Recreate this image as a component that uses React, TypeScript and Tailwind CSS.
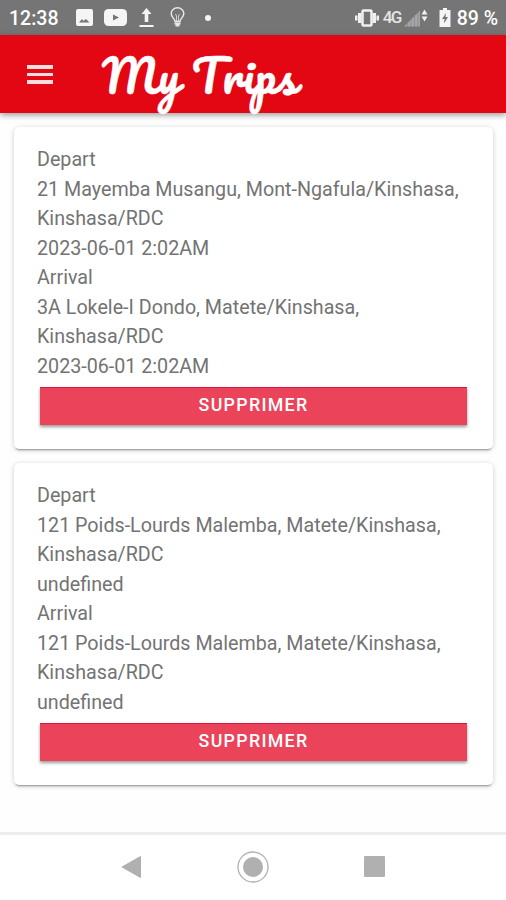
import React from "react";

interface Trip {
  id: number;
  depart: string[];
  departTime: string;
  arrival: string[];
  arrivalTime: string;
}

const trips: Trip[] = [
  {
    id: 1,
    depart: ["21 Mayemba Musangu, Mont-Ngafula/Kinshasa,", "Kinshasa/RDC"],
    departTime: "2023-06-01 2:02AM",
    arrival: ["3A Lokele-I Dondo, Matete/Kinshasa,", "Kinshasa/RDC"],
    arrivalTime: "2023-06-01 2:02AM",
  },
  {
    id: 2,
    depart: ["121 Poids-Lourds Malemba, Matete/Kinshasa,", "Kinshasa/RDC"],
    departTime: "undefined",
    arrival: ["121 Poids-Lourds Malemba, Matete/Kinshasa,", "Kinshasa/RDC"],
    arrivalTime: "undefined",
  },
];

const StatusBar: React.FC = () => (
  <div className="flex h-[35px] shrink-0 items-center bg-[#757575] pl-[9px] pr-[8px] text-white">
    <span className="w-[67px] pt-[2px] text-[19.500px] leading-[33px] font-medium whitespace-nowrap">12:38</span>

    {/* Notifications */}
    <svg className="h-[17px] w-[17px]" viewBox="0 0 17 17">
      <rect width="17" height="17" rx="2" fill="#f5f5f5" />
      <path d="M3 13.500l3-3.500 1.500 2 1-1 1.500-1 3.500 3.500z" fill="#757575" />
    </svg>
    <svg className="ml-[11px] h-[17px] w-[23px]" viewBox="0 0 23 17">
      <rect width="23" height="17" rx="4.500" fill="#f5f5f5" />
      <path d="M9 5.500l6 3-6 3z" fill="#757575" />
    </svg>
    <svg className="ml-[12px] h-[20px] w-[15px]" viewBox="0 0 15 20">
      <path d="M7.500 0l5 6H9.300V14H5.700V6H2.500zM.5 17h14v2H.5z" fill="#f5f5f5" />
    </svg>
    <svg className="ml-[16px] h-[21px] w-[15px]" viewBox="0 0 15 21" fill="none" stroke="#e8e8e8" strokeWidth="1.500">
      <path d="M5 14.500c0-3-3.800-4-3.800-8a6.300 5.700 0 0 1 12.600 0c0 4-3.800 5-3.800 8z" />
      <path d="M5.500 7l1 2v5M9.500 7l-1 2v5" strokeWidth=".8" />
      <path d="M4.500 16.500h6M5.500 18.500h4" strokeWidth="2" />
    </svg>
    <span className="ml-[20px] h-[6px] w-[6px] rounded-full bg-[#f5f5f5]" />

    {/* System state */}
    <div className="ml-auto flex items-center">
      <svg className="h-[18px] w-[24px]" viewBox="0 0 24 18" fill="#f0f0f0">
        <path d="M0 6.500h2.500v5H0zM3 4h3.500v10H3zM17.500 4H21v10h-3.500zM21.500 6.500H24v5h-2.500z" />
        <rect x="7.500" y="1.500" width="9" height="15" rx="1" fill="none" stroke="#f0f0f0" strokeWidth="2.500" />
      </svg>
      <span className="ml-[4px] w-[21px] text-[17px] leading-[35px] font-medium tracking-[-1.5px] text-[#e6e6e6]">4G</span>
      <svg className="h-[20px] w-[24px]" viewBox="0 0 24 20">
        <path d="M0 18.500L16 2.500v16z" fill="#a5a5a5" />
        <path d="M3.500 14v5M7 10v9M10.500 7v12M14 4v15" stroke="#858585" strokeWidth=".7" />
        <path d="M20.500 1.500l3 5h-6zM20.500 13.500l3-5h-6z" fill="#f0f0f0" />
      </svg>
      <svg className="ml-[11px] h-[19px] w-[12px]" viewBox="0 0 12 19">
        <path d="M4 0h4v2h3.500v17H.5V2H4z" fill="#f5f5f5" />
        <path d="M7 5l-4 6h2.500L5 15.500 9 9H6.500z" fill="#757575" />
      </svg>
      <span className="ml-[6px] pt-[2px] text-[19.500px] leading-[33px] font-medium whitespace-nowrap">89 %</span>
    </div>
  </div>
);

const Header: React.FC = () => (
  <header className="z-10 flex h-[78px] shrink-0 items-center bg-[#e30613] pl-[27px] shadow-[0_2px_6px_rgba(0,0,0,0.4)]">
    <button className="flex w-[26px] flex-col gap-[4px]" aria-label="Menu">
      <span className="h-[4px] bg-[#fbdcde]" />
      <span className="h-[3px] bg-[#fbdcde]" />
      <span className="h-[4px] bg-[#fbdcde]" />
    </button>
    <h1 className="ml-[49px] pt-px font-[Pacifico,cursive] text-[45px] leading-[76px] tracking-[0.6px] whitespace-nowrap text-white [-webkit-text-stroke:0.4px_white] [word-spacing:-1px]">
      My Trips
    </h1>
  </header>
);

const TripCard: React.FC<{ trip: Trip }> = ({ trip }) => {
  const lines = ["Depart", ...trip.depart, trip.departTime, "Arrival", ...trip.arrival, trip.arrivalTime];

  return (
    <div className="flex h-[322px] flex-col rounded-[5px] bg-white px-[23px] pt-[18px] shadow-[0_3px_2px_-2px_rgba(0,0,0,0.35),0_1px_5px_rgba(0,0,0,0.2)]">
      <div className="text-[19.700px] leading-[29.550px] whitespace-nowrap text-[#737373]">
        {lines.map((line, i) => (
          <p key={i}>{line}</p>
        ))}
      </div>
      <button className="mx-[3px] mt-[6px] h-[38px] bg-[#eb445a] pb-[2px] text-[17.800px] font-medium tracking-[1.3px] text-white shadow-[0_2px_3px_rgba(0,0,0,0.4),inset_0_1px_0_#d41642]">
        SUPPRIMER
      </button>
    </div>
  );
};

const NavigationBar: React.FC = () => (
  <nav className="flex h-[68px] shrink-0 items-center justify-between border-t-[3px] border-[#ededed] bg-white pr-[121px] pb-[2px] pl-[121px]">
    <svg className="h-[24px] w-[21px]" viewBox="0 0 21 24">
      <path d="M1 12L19.500 1.500v21z" fill="#b0b0b0" stroke="#b0b0b0" strokeLinejoin="round" />
    </svg>
    <svg className="h-[32px] w-[32px]" viewBox="0 0 32 32">
      <circle cx="16" cy="16" r="15" fill="none" stroke="#b0b0b0" strokeWidth="1.300" />
      <circle cx="16" cy="16" r="10" fill="#b0b0b0" />
    </svg>
    <span className="h-[21px] w-[21px] rounded-[1px] bg-[#b0b0b0]" />
  </nav>
);

const App: React.FC = () => {
  return (
    <div className="flex h-[900px] w-[506px] flex-col overflow-hidden bg-[#fefefe] font-[Roboto,sans-serif]">
      <StatusBar />
      <Header />
      <main className="flex grow flex-col gap-[14px] pt-[14px] pr-[13px] pl-[14px]">
        {trips.map((trip) => (
          <TripCard key={trip.id} trip={trip} />
        ))}
      </main>
      <NavigationBar />
    </div>
  );
};

export default App;
